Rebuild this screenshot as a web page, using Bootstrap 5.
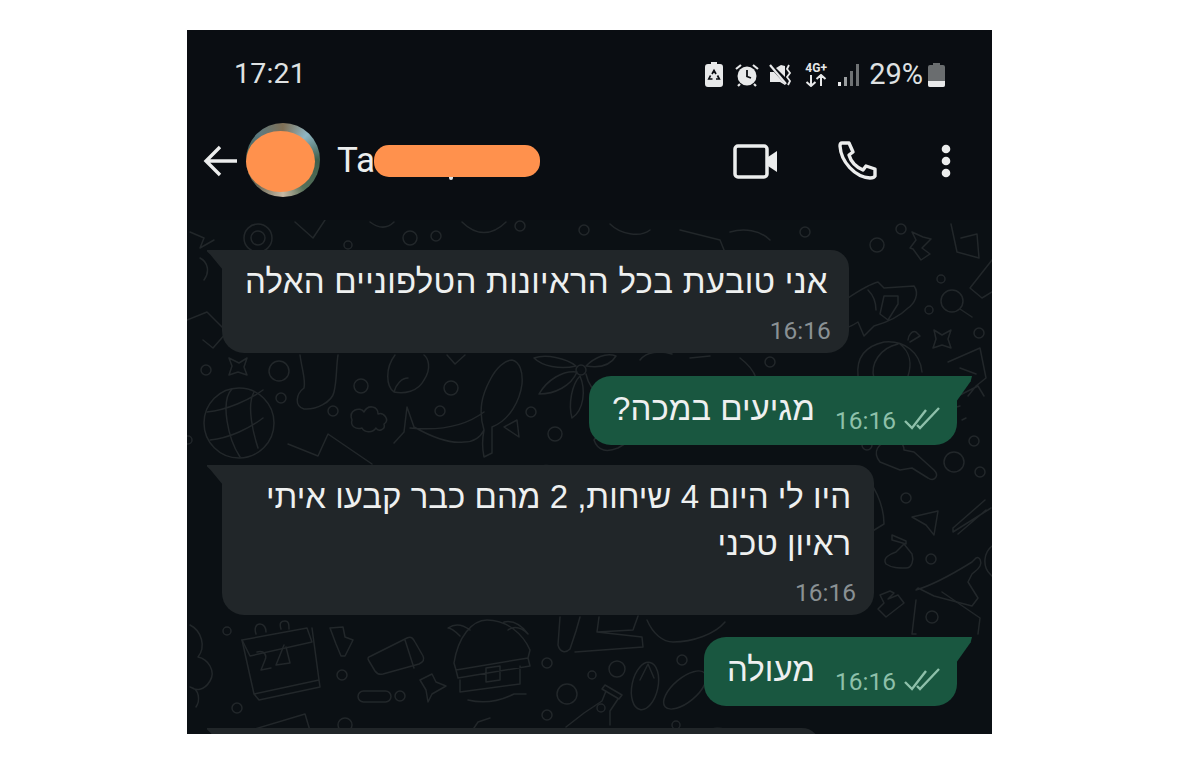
<!DOCTYPE html>
<html lang="he">
<head>
    <meta charset="UTF-8">
    <meta name="viewport" content="width=device-width, initial-scale=1.0">
    <title>WhatsApp chat</title>
    <link href="https://cdn.jsdelivr.net/npm/bootstrap@5.3.0/dist/css/bootstrap.min.css" rel="stylesheet">
    <style>
        body { background: #fff; height: 764px; overflow: hidden; }
        .phone-frame {
            width: 805px; height: 704px; margin: 30px 0 0 187px;
            background: #0a0d12; overflow: hidden;
            font-family: Roboto, "Liberation Sans", sans-serif;
        }
        .top-area { height: 190px; background: #0a0d12; color: #e6e7e8; }
        .status-row { height: 88px; padding: 1px 47px 0 47px; }
        .clock { font-size: 28.5px; color: #dfe1e2; letter-spacing: .2px; }
        .pct { font-size: 29px; color: #dfe1e2; line-height: 1; margin: 0 5px 0 0; }
        .net-label { font-size: 12px; font-weight: 700; line-height: 12px; color: #e6e7e8; display: block; text-align: center; }
        .gap-w { margin-right: 12px; }
        .gap-m { margin-right: 10px; }
        .gap-n { margin-right: 8px; }
        .app-row { height: 85px; padding: 0 41px 0 16px; }
        .avatar-ring {
            width: 74px; height: 74px; border-radius: 50%; margin-left: 7px; flex: none;
            background: conic-gradient(#7f6f55, #8fb6c4 12%, #3f5f4c 25%, #56705a 40%, #c9b9a4 50%, #6d6a58 62%, #3d5c4c 75%, #5d7a80 88%, #7f6f55);
            position: relative; top: -1px;
        }
        .avatar-blot {
            position: absolute; left: 0; top: 8px; width: 69px; height: 61px;
            border-radius: 50%; background: #ff914d;
        }
        .contact-name { font-size: 35px; color: #eceded; margin-left: 17px; line-height: 1; width: 37px; }
        .name-blot { width: 166px; height: 32px; border-radius: 15px; background: #ff914d; margin-top: 1px; position: relative; }
        .name-blot::before { content: ""; position: absolute; left: 75px; bottom: -3px; width: 4px; height: 3px; background: #dfe1e2; border-radius: 0 0 2px 2px; }
        .name-blot::after { content: ""; position: absolute; right: -4px; top: 9px; width: 6px; height: 15px; background: #c9ab8c; border-radius: 0 6px 6px 0; z-index: -1; }
        .call-btns { gap: 58px; }
        .call-btns .dots { margin-left: 4px; }
        .chat-area { height: 514px; position: relative; background: #0b1014; padding-top: 30px; }
        .doodles { position: absolute; left: 0; top: 0; width: 805px; height: 514px; }
        .doodles * { fill: none; stroke: #22272a; stroke-width: 1.5; stroke-linecap: round; stroke-linejoin: round; }
        .msg-row { position: relative; }
        .bubble { position: relative; color: #eef0f0; font-family: "Liberation Sans", "Noto Sans", sans-serif; white-space: nowrap; }
        .bubble-in { background: #212629; border-radius: 0 18px 22px 22px; margin-left: 35px; width: fit-content; }
        .bubble-in::before {
            content: ""; position: absolute; left: -15px; top: 0; width: 16px; height: 20px;
            background: #212629; clip-path: polygon(0 0, 100% 0, 100% 100%, 20% 22%, 0 8%);
        }
        .bubble-out { background: #195740; border-radius: 22px 0 22px 22px; margin-left: auto; margin-right: 35px; width: fit-content; height: 69px; }
        .bubble-out::after {
            content: ""; position: absolute; right: -15px; top: 0; width: 16px; height: 26px;
            background: #195740; clip-path: polygon(0 0, 100% 0, 92% 20%, 0 100%);
        }
        .msg-text { font-size: 33px; line-height: 47px; }
        .in-body { padding: 8px 21px 0 23px; text-align: right; letter-spacing: .29px; }
        .in-body-wide { padding: 8px 23px 0 44px; text-align: right; }
        .meta-in { font-family: Roboto, sans-serif; font-size: 24.5px; color: #8a9194; line-height: 51px; height: 48px; text-align: right; padding-right: 18px; }
        .out-text { padding: 9px 0 0 23px; }
        .meta-out { font-family: Roboto, sans-serif; font-size: 24.5px; color: #8ec0aa; line-height: 1; padding: 33px 17px 0 20px; }
        .tick-ico { margin-top: -2px; }
        .gap-a { margin-top: 23px; }
        .gap-b { margin-top: 20px; }
        .gap-c { margin-top: 22px; }
        .peek { width: 598px; height: 40px; }
    </style>
</head>
<body>
    <div class="phone-frame">
        <div class="top-area">
            <div class="status-row d-flex align-items-center justify-content-between">
                <span class="clock">17:21</span>
                <div class="d-flex align-items-center">
                    <!-- battery saver -->
                    <svg width="18" height="25" viewBox="0 0 18 25" class="gap-w">
                        <path d="M6 0h6v2h3a3 3 0 0 1 3 3v17a3 3 0 0 1-3 3H3a3 3 0 0 1-3-3V5a3 3 0 0 1 3-3h3z" fill="#e8e9ea"/>
                        <path d="M7 12l2-3.500 2 3.500M12.500 13.500l1.800 3.500h-3.300M7.500 17H3.800l1.700-3.500" stroke="#0a0d12" stroke-width="1.700" fill="none"/>
                    </svg>
                    <!-- alarm -->
                    <svg width="24" height="24" viewBox="0 0 24 24" class="gap-m">
                        <circle cx="12" cy="13" r="9.500" fill="#e8e9ea"/>
                        <path d="M12 7v6.500l4 1.500" stroke="#0a0d12" stroke-width="1.800" fill="none"/>
                        <path d="M1 6l5-4M23 6l-5-4M5 21l-2 2M19 21l2 2" stroke="#e8e9ea" stroke-width="2.200" fill="none"/>
                    </svg>
                    <!-- mute vibrate -->
                    <svg width="24" height="24" viewBox="0 0 24 24" class="gap-m">
                        <path d="M1 9h4l11 12v1l-5-3H1z" fill="#e8e9ea"/>
                        <path d="M7 5l5-3 4 1v11z" fill="#e8e9ea"/>
                        <path d="M1 2l16 19" stroke="#e8e9ea" stroke-width="2.200"/>
                        <path d="M20 2l-2 4 3 4-3 4 3 4-2 4" stroke="#e8e9ea" stroke-width="1.800" fill="none"/>
                    </svg>
                    <!-- network -->
                    <div class="gap-n">
                        <span class="net-label">4G+</span>
                        <svg width="26" height="13" viewBox="0 0 26 13" class="d-block">
                            <path d="M8 1v11M3.500 8l4.500 4 4.500-4M18 12V1M13.500 5l4.500-4 4.500 4" stroke="#e8e9ea" stroke-width="2" fill="none"/>
                        </svg>
                    </div>
                    <!-- signal -->
                    <svg width="22" height="24" viewBox="0 0 22 24" class="gap-m">
                        <rect x="1" y="19" width="3" height="4" fill="#e8e9ea"/>
                        <rect x="7" y="14" width="3" height="9" fill="#9a9d9f"/>
                        <rect x="13" y="8" width="3" height="15" fill="#6f7274"/>
                        <rect x="19" y="1" width="3" height="22" fill="#6f7274"/>
                    </svg>
                    <span class="pct">29%</span>
                    <!-- battery -->
                    <svg width="17" height="24" viewBox="0 0 17 24">
                        <path d="M5 0h7v2h3a2 2 0 0 1 2 2v18a2 2 0 0 1-2 2H2a2 2 0 0 1-2-2V4a2 2 0 0 1 2-2h3z" fill="#6a6d6f"/>
                        <path d="M0 18h17v4a2 2 0 0 1-2 2H2a2 2 0 0 1-2-2z" fill="#e8e9ea"/>
                    </svg>
                </div>
            </div>
            <div class="app-row d-flex align-items-center">
                <svg width="36" height="36" viewBox="0 0 36 36">
                    <path d="M34 18H3M17 4L3 18l14 14" stroke="#eceded" stroke-width="3.400" fill="none"/>
                </svg>
                <div class="avatar-ring"><div class="avatar-blot"></div></div>
                <span class="contact-name">Ta</span>
                <div class="name-blot"></div>
                <div class="ms-auto d-flex align-items-center call-btns">
                    <svg width="46" height="36" viewBox="0 0 46 36">
                        <rect x="2" y="3" width="32" height="31" rx="3" stroke="#eceded" stroke-width="3.500" fill="none"/>
                        <path d="M35 14l9-6v21l-9-6z" fill="#eceded"/>
                    </svg>
                    <svg width="42" height="42" viewBox="0 0 42 42">
                        <path d="M5 3h7l4 9-4 3c2 7 7 12 14 15l3-4 9 3v7c-1 2-3 2-5 2C18 37 4 22 3 6c0-2 1-3 2-3z" stroke="#eceded" stroke-width="3.400" fill="none" stroke-linejoin="round"/>
                    </svg>
                    <svg width="10" height="36" viewBox="0 0 10 36" class="dots">
                        <circle cx="5" cy="6" r="4.300" fill="#eceded"/>
                        <circle cx="5" cy="18" r="4.300" fill="#eceded"/>
                        <circle cx="5" cy="30" r="4.300" fill="#eceded"/>
                    </svg>
                </div>
            </div>
        </div>

        <div class="chat-area">
            <!-- wallpaper, drawn in page coordinates -->
            <svg class="doodles" viewBox="187 220 805 514">
                <!-- top left -->
                <circle cx="258" cy="238" r="14"/><circle cx="258" cy="238" r="7"/>
                <path d="M190 232l14 6-4 10 14-8M200 258c8 4 10 14 4 22M187 320l20-8 20 20-14 16-10-8"/>
                <!-- row under first message -->
                <path d="M229 358l10 5 8-5-3 9 3 8-9-3-9 3 3-9z"/>
                <circle cx="279" cy="371" r="10"/><circle cx="206" cy="370" r="5"/><circle cx="281" cy="398" r="5"/>
                <!-- sock -->
                <path d="M300 355c2 15 6 25 4 33-8 6-10 18 0 21 12 1 28-7 30-17 3-12 2-24 4-37"/>
                <circle cx="361" cy="386" r="7"/><circle cx="333" cy="411" r="5"/>
                <!-- stone -->
                <path d="M395 355c-10 13-9 31-1 37 10 2 24 0 30-12 8-12 4-22 0-25M408 378c-6 0-12 6-14 14"/>
                <path d="M447 355l8 9 10-9"/>
                <circle cx="451" cy="388" r="7"/>
                <!-- globe -->
                <circle cx="239" cy="423" r="35"/>
                <path d="M207 412c20-2 42-12 56-22M210 440c20-2 40-12 53-22M232 389c-12 12-4 50 8 68M254 392c-8 14 0 44 4 56"/>
                <circle cx="188" cy="440" r="4"/>
                <!-- cloud -->
                <path d="M352 420c-4-10 8-14 12-8 4-8 14-6 14 2 6-2 12 6 6 10 2 6-6 8-8 4-4 6-12 4-14 0-6 2-12-2-10-8z"/>
                <!-- whale -->
                <path d="M394 443l10-11 3-25 7 20c16 9 36 17 50 15 10 0 16-4 20-12-6-20-2-35 6-50 6-12 15-20 22-20 8 2 11 12 10 24-2 16-12 36-30 43v26l-8 4c-2-9-2-17 0-27M410 428c20 2 50 2 74-16M504 427l13-7 2 17z"/>
                <circle cx="440" cy="411" r="5"/><circle cx="531" cy="412" r="5"/><circle cx="555" cy="434" r="7"/>
                <path d="M520 480c10-18 40-20 52-2"/>
                <path d="M288 444l30 12 10-22 44 30"/>
                <!-- flower -->
                <circle cx="581" cy="370" r="5"/>
                <path d="M577 372c-14-2-30 8-38 22 16 0 32-8 38-22zM580 376c-8 8-12 28-8 42 12-8 14-28 8-42zM576 366c-10-8-30-12-42-8 8 8 26 12 42 8zM586 366c8-8 20-14 30-10-6 10-18 12-30 10zM586 374c2 10 8 18 14 20"/>
                <circle cx="622" cy="430" r="5"/>
                <path d="M594 440c6-10 12-14 20-12l14 14-10 6c-10 4-20 4-24-8z"/>
                <!-- top middle/right -->
                <circle cx="410" cy="238" r="7"/><circle cx="436" cy="236" r="5"/><circle cx="348" cy="245" r="4"/>
                <circle cx="520" cy="226" r="5"/><circle cx="584" cy="230" r="5"/>
                <circle cx="805" cy="232" r="5"/>
                <path d="M295 222l18 16 12-18M370 222c8 6 16 8 24 0M462 222c14 14 30 14 44 0M610 224c10 10 30 14 40 6M680 230l40 10 4 10M730 232c14-4 30-2 40 8"/>
                <path d="M640 360c6-8 20-10 32-6M690 358l20-2M740 358c8 6 14 14 16 20"/>
                <circle cx="770" cy="362" r="5"/>
                <!-- right column -->
                <circle cx="901" cy="229" r="5"/><circle cx="877" cy="245" r="7"/>
                <path d="M931 239l-9 9 8 6-9 6-8-11-3-1 6-8-4-8 11 5z"/>
                <path d="M951 224l6 28 22 6-2-24-16 4M992 260l-22 28 12 10 10-6"/>
                <circle cx="941" cy="279" r="4"/><circle cx="929" cy="310" r="4"/>
                <circle cx="952" cy="301" r="11"/><path d="M960 309l12 8"/>
                <circle cx="979" cy="333" r="5"/>
                <path d="M934 330l8 5 9-5-3 9 3 9-9-3-9 3 3-9z"/>
                <!-- fish -->
                <path d="M848 298c12-8 22-14 30-16l6 6 30-2c6 8 0 18-6 22-8 8-20 14-34 18l-10 10-6-14c-6 4-16 8-24 10M868 290c6 6 8 12 8 20M884 296l-4 18 8 6 10-16 0-8z"/>
                <!-- beach ball -->
                <path d="M858 376c-2-20 8-30 26-34 20-2 36 10 38 30M874 378c-4-14 6-30 24-34M900 344c10 8 12 20 8 32M908 340c0-4 4-10 8-8l4 4-10 6"/>
                <!-- kite -->
                <path d="M948 362l32-14 6 30-10 8-8 10M960 368l16 6M984 396l-6-10-24 12-8 12 14-4M962 420l4-2"/>
                <circle cx="974" cy="441" r="5"/>
                <!-- between 2nd and 3rd -->
                <circle cx="867" cy="445" r="5"/>
                <path d="M880 462c-8-10-2-20 10-20 6-4 14 0 14 8l10 2 20 18c6 6 0 12-6 8l-16-10-12 2z"/>
                <circle cx="954" cy="462" r="10"/><circle cx="980" cy="472" r="5"/>
                <circle cx="906" cy="498" r="5"/>
                <path d="M912 517l26-6-4 24-8-10-14-8z"/>
                <path d="M860 470c14 14 24 34 24 54l-26 16M892 535l14 6 0 3-14-4zM985 500l-32 28 0 4 38-24M986 510l-28 24M992 546c-8 6-10 20-2 28l4 4"/>
                <circle cx="931" cy="559" r="5"/>
                <path d="M896 552c6-6 8-8 8-8l8 10c2 6 0 14-6 14-8 0-14 0-20-4-4-6 4-10 10-12z"/>
                <path d="M880 595l10-4 4 2-6 6 10-4 6 8-18 14-8-8 6-6z"/>
                <path d="M916 590c20-6 40-18 56-28l4-4c4-2 6 4 4 8-2 4-6 6-8 8l-4 8 10 16-6 8-38-10-16-8z"/>
                <path d="M916 600l-4 34 4 0M942 592l38 26-2 16"/>
                <circle cx="932" cy="617" r="6"/>
                <!-- bottom left: bush, calendar -->
                <path d="M190 625c12 6 16 22 8 32 10 2 18 14 12 24-6 10-14 10-20 6 10 2 10 14 6 20"/>
                <circle cx="227" cy="631" r="4"/><circle cx="237" cy="708" r="5"/>
                <path d="M242 640l65-12 5 14-62 14zM256 634c-2-6 0-10 4-10s6 4 6 8M281 629c-2-6 0-8 4-8s4 4 4 8"/>
                <path d="M242 640l12 54 5 6 61-13-1-7-7-52M254 694l65-14"/>
                <path d="M257 652c8-2 10 4 8 8l-4 10 10-2M284 645l-8 20 14-2-4-16"/>
                <path d="M330 628l13-1 2 10 8 3-8 16-4 0-5-12z"/>
                <circle cx="342" cy="675" r="5"/>
                <rect x="358" y="691" width="33" height="11" rx="5.500"/>
                <circle cx="400" cy="696" r="5"/>
                <path d="M371 656l36-18c4-2 6 0 8 4l8 14c2 4 0 6-4 8l-36 10c-4 1-6 0-8-3l-6-10c-2-3-1-4 2-5zM405 640l9 28"/>
                <path d="M420 680l12-6 4 8 10 4-14 8-4 8-2-12z"/>
                <!-- hut -->
                <path d="M454 663c4-26 18-43 33-43 20 0 36 14 43 30l-2 8-72 12zM460 636c-4-4-8-8-12-8 6-4 14-4 22 2M508 630c6-4 12-4 20 4-6-8-14-14-24-12M456 670l72-12 2 8-72 12zM460 680l0 12 60-8 0-18M486 668l14-2 0 14-14 2z"/>
                <path d="M468 700c16 4 30 2 46-6l12 0"/>
                <circle cx="345" cy="725" r="7"/>
                <path d="M245 732l60-18 6 20M470 734l8-12 12-4"/>
                <!-- bottom middle -->
                <circle cx="547" cy="663" r="5"/><circle cx="592" cy="675" r="4"/><circle cx="617" cy="669" r="8"/>
                <circle cx="567" cy="694" r="10"/><circle cx="547" cy="715" r="5"/><circle cx="682" cy="660" r="5"/>
                <path d="M560 617l-2 28c2 8 8 8 12 4l6-18 4-14M575 652l68-5-1-10-45-5 2-15M597 632l36-2 5-14"/>
                <path d="M647 620c6 14 16 22 26 22 20 0 42-8 52-20"/>
                <ellipse cx="645" cy="686" rx="13" ry="24" transform="rotate(12 645 686)"/>
                <path d="M640 680l8-16 6 14"/>
                <ellipse cx="685" cy="690" rx="12" ry="26" transform="rotate(50 685 690)"/>
                <path d="M605 685l17 10-3 4-17-10zM606 691l-4 10-18 12-18 14M618 699l-8 12 0 14"/>
                <circle cx="601" cy="708" r="4"/>
                <circle cx="676" cy="725" r="4"/><path d="M700 734c8-6 20-8 32-2"/>
            </svg>

            <div class="msg-row">
                <div class="bubble bubble-in">
                    <div class="msg-text in-body" dir="rtl">אני טובעת בכל הראיונות הטלפוניים האלה</div>
                    <div class="meta-in">16:16</div>
                </div>
            </div>
            <div class="msg-row gap-a">
                <div class="bubble bubble-out d-flex">
                    <div class="msg-text out-text" dir="rtl">מגיעים במכה?</div>
                    <div class="meta-out d-flex">16:16
                        <svg width="36" height="24" viewBox="0 0 36 24" class="ms-2 tick-ico">
                            <path d="M1 14l7 7L22 3M13 18l3 3L35 1" stroke="#8ec0aa" stroke-width="2.400" fill="none"/>
                        </svg>
                    </div>
                </div>
            </div>
            <div class="msg-row gap-b">
                <div class="bubble bubble-in">
                    <div class="msg-text in-body-wide" dir="rtl">היו לי היום 4 שיחות, 2 מהם כבר קבעו איתי<br>ראיון טכני</div>
                    <div class="meta-in">16:16</div>
                </div>
            </div>
            <div class="msg-row gap-c">
                <div class="bubble bubble-out d-flex">
                    <div class="msg-text out-text" dir="rtl">מעולה</div>
                    <div class="meta-out d-flex">16:16
                        <svg width="36" height="24" viewBox="0 0 36 24" class="ms-2 tick-ico">
                            <path d="M1 14l7 7L22 3M13 18l3 3L35 1" stroke="#8ec0aa" stroke-width="2.400" fill="none"/>
                        </svg>
                    </div>
                </div>
            </div>
            <div class="msg-row gap-c">
                <div class="bubble bubble-in peek"></div>
            </div>
        </div>
    </div>
    <script src="https://cdn.jsdelivr.net/npm/bootstrap@5.3.0/dist/js/bootstrap.bundle.min.js"></script>
</body>
</html>
